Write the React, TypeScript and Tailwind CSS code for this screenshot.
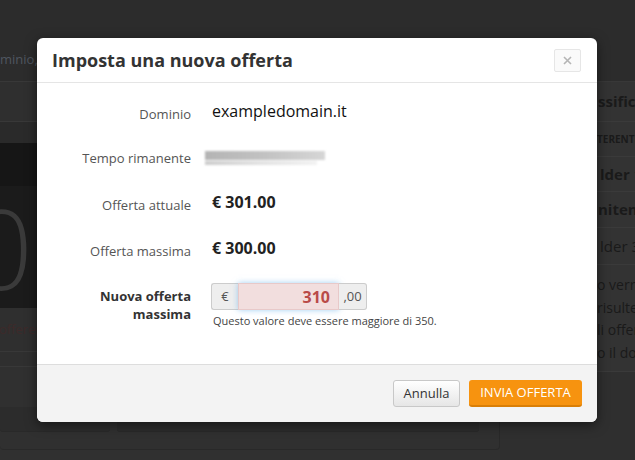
import React from "react";

const font = { fontFamily: '"Open Sans", "Noto Sans", sans-serif' };

function BgRow({ h, cls, children }: { h: string; cls: string; children?: React.ReactNode }) {
  return <div className={`${h} ${cls} flex items-center overflow-hidden whitespace-nowrap`}>{children}</div>;
}

export default function App() {
  return (
    <div className="relative w-[635px] h-[460px] overflow-hidden bg-[#2e2e2e]" style={font}>
      {/* dimmed page behind the dialog */}
      <div className="flex flex-col h-full">
        <div className="h-[82px] shrink-0 border-b border-[#383838] bg-[#2c2c2c] flex items-end pb-[12px]">
          <span className="text-[13px] text-[#4f5660]">minio,</span>
        </div>
        <div className="flex flex-1">
          <div className="w-[500px] shrink-0 flex flex-col">
            <div className="h-[40px] bg-[#2f2f2f] border-b border-[#383838]" />
            <div className="h-[21px] bg-[#2a2a2a]" />
            <div className="h-[43px] bg-[#161616]" />
            <BgRow h="h-[122px]" cls="bg-[#1b1b1b]">
              <span className="text-[110px] font-light leading-none text-[#3a3a3a] -ml-[30px]">0</span>
            </BgRow>
            <BgRow h="h-[44px]" cls="bg-[#2f2f2f] border-b border-[#383838]">
              <span className="text-[13px] text-[#3d2a2a] -ml-[1px]">offerente</span>
            </BgRow>
            <div className="h-[15px] border-b border-[#383838] bg-[#2f2f2f]" />
            <div className="flex-1 bg-[#303030] pt-[40px]">
              <div className="h-[43px] w-[500px] rounded-b-[4px] border-b border-r border-[#292929] flex gap-[7px] items-start">
                <div className="w-[110px] h-[25px] rounded-b-[3px] bg-[#2c2c2c] border-b border-[#292929]" />
                <div className="w-[362px] h-[25px] rounded-b-[3px] bg-[#2c2c2c] border-b border-[#292929]" />
              </div>
            </div>
          </div>
          <div className="flex-1 flex flex-col whitespace-nowrap overflow-hidden text-[#1a1a1a]">
            <div className="bg-[#333333] flex flex-col">
              <div className="h-[40px] flex items-center border-b border-[#3a3a3a] pl-[98px] text-[15px] font-bold">ssifica</div>
              <div className="h-[35px] flex items-center border-b border-[#3a3a3a] pl-[97px] text-[10px] font-bold">TERENTE</div>
              <div className="h-[35px] flex items-center border-b border-[#3a3a3a] pl-[100px] text-[15px] font-bold">lder 1</div>
              <div className="h-[36px] flex items-center border-b border-[#3a3a3a] pl-[98px] text-[15px] font-bold">nitent</div>
              <div className="h-[37px] flex items-center border-b border-[#3a3a3a] pl-[100px] text-[15px]">lder 3</div>
              <div className="flex flex-col pt-[9px] pl-[97px] text-[14px] leading-[22.5px] border-b border-[#3a3a3a] pb-[7px]">
                <span>o verrà</span>
                <span>risulter</span>
                <span>li offer</span>
                <span>o il dom</span>
              </div>
            </div>
            <div className="flex-1 bg-[#2f2f2f]" />
          </div>
        </div>
      </div>

      {/* dialog */}
      <div className="absolute left-[37px] top-[38px] w-[560px] h-[384px] rounded-[6px] bg-white shadow-[0_3px_12px_rgba(0,0,0,0.5)] flex flex-col overflow-hidden">
        <div className="h-[45px] shrink-0 border-b border-[#e5e5e5] flex items-center justify-between pl-[15px] pr-[16px]">
          <h3 className="text-[18px] font-bold text-[#333] leading-none">Imposta una nuova offerta</h3>
          <div className="w-[27px] h-[23px] border border-[#e6e6e6] rounded-[2px] bg-[#fafafa] flex items-center justify-center">
            <svg width="9" height="9" viewBox="0 0 9 9"><path d="M1 1L8 8M8 1L1 8" stroke="#b5b5b5" strokeWidth="1.6" /></svg>
          </div>
        </div>

        <div className="flex-1 flex flex-col pt-[7px]">
          <div className="h-[45px] flex items-center">
            <div className="w-[154px] pt-[4px] text-right text-[13px] text-[#555]">Dominio</div>
            <div className="ml-[21px] pb-[4px] text-[16px] text-[#111]">exampledomain.it</div>
          </div>
          <div className="h-[46px] flex items-center">
            <div className="w-[154px] pt-[2px] text-right text-[13px] text-[#555]">Tempo rimanente</div>
            <div className="ml-[14px] flex flex-col gap-[1px] blur-[1.2px]">
              <div className="w-[120px] h-[9px] bg-gradient-to-r from-[#b4b4b4] via-[#c2c2c2] to-[#d6d6d6]" />
              <div className="w-[112px] h-[4px] bg-gradient-to-r from-[#cccccc] via-[#e2e2e2] to-[#f2f2f2]" />
            </div>
          </div>
          <div className="h-[46px] flex items-center">
            <div className="w-[154px] pt-[4px] text-right text-[13px] text-[#555]">Offerta attuale</div>
            <div className="ml-[21px] pb-[4px] text-[16px] font-bold text-[#222]">€ 301.00</div>
          </div>
          <div className="h-[45px] flex items-center">
            <div className="w-[154px] pt-[4px] text-right text-[13px] text-[#555]">Offerta massima</div>
            <div className="ml-[21px] pb-[4px] text-[16px] font-bold text-[#222]">€ 300.00</div>
          </div>
          <div className="mt-[11px] flex items-start">
            <div className="w-[154px] pt-[4px] text-right text-[13px] leading-[18px] font-bold text-[#333]">
              Nuova offerta
              <br />
              massima
            </div>
            <div className="ml-[20px] flex flex-col">
              <div className="flex h-[27px]">
                <div className="w-[27px] h-full flex items-center justify-center bg-[#eeeeee] border border-[#cccccc] border-r-0 rounded-l-[3px] text-[13px] text-[#555]">€</div>
                <div className="w-[101px] h-full flex items-center justify-end pr-[8px] bg-[#f2dede] border border-[#e8c9c9] shadow-[0_0_6px_rgba(102,175,233,0.6)] text-[16px] font-bold text-[#b94a48]">310</div>
                <div className="w-[28px] h-full flex items-center justify-center bg-[#eeeeee] border border-[#cccccc] border-l-0 rounded-r-[3px] text-[13px] text-[#555]">,00</div>
              </div>
              <div className="mt-[4px] text-[11px] leading-[14px] text-[#444] pl-[2px]">Questo valore deve essere maggiore di 350.</div>
            </div>
          </div>
        </div>

        <div className="h-[58px] shrink-0 border-t border-[#dddddd] bg-[#f3f3f3] flex items-center justify-end gap-[9px] pr-[15px]">
          <div className="w-[67px] h-[27px] rounded-[3px] border border-[#c8c8c8] bg-gradient-to-b from-[#ffffff] to-[#e6e6e6] flex items-center justify-center text-[13px] text-[#333]">Annulla</div>
          <div className="w-[113px] h-[27px] rounded-[3px] bg-[#f7930f] border-b-2 border-[#d97e06] flex items-center justify-center text-[13px] text-white">INVIA OFFERTA</div>
        </div>
      </div>
    </div>
  );
}
